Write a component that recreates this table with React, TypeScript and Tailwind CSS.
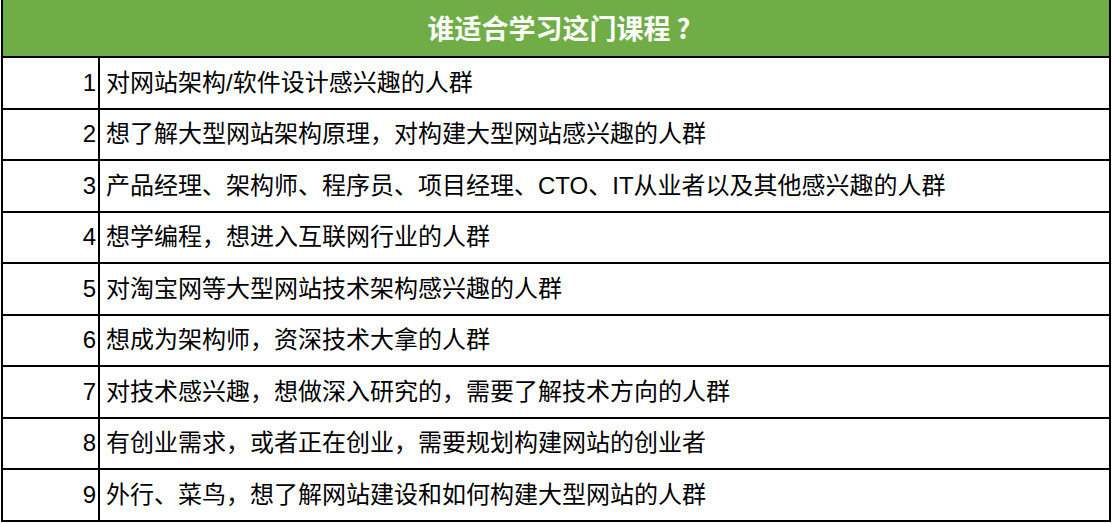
const ROWS = [
  "对网站架构/软件设计感兴趣的人群",
  "想了解大型网站架构原理，对构建大型网站感兴趣的人群",
  "产品经理、架构师、程序员、项目经理、CTO、IT从业者以及其他感兴趣的人群",
  "想学编程，想进入互联网行业的人群",
  "对淘宝网等大型网站技术架构感兴趣的人群",
  "想成为架构师，资深技术大拿的人群",
  "对技术感兴趣，想做深入研究的，需要了解技术方向的人群",
  "有创业需求，或者正在创业，需要规划构建网站的创业者",
  "外行、菜鸟，想了解网站建设和如何构建大型网站的人群",
];

export default function App() {
  return (
    <div className="h-[524px] w-[1112px] overflow-hidden bg-white font-['Liberation_Sans','Noto_Sans_CJK_SC',sans-serif] text-black">
      <div className="ml-[1px] w-[1110px] border-x-2 border-b-2 border-black">
        <div className="flex h-[56px] items-center justify-center bg-[#70ad47] pl-[6px] font-['Noto_Sans_CJK_SC',sans-serif] text-[27px] font-bold text-white">
          谁适合学习这门课程 ?
        </div>
        {ROWS.map((text, i) => (
          <div key={i} className="grid h-[51.5px] grid-cols-[97px_1fr] border-t-2 border-black text-[24px]">
            <div className="flex items-center justify-end border-r-2 border-black pr-[2px]">{i + 1}</div>
            <div className="flex items-center whitespace-nowrap pl-[6px]">{text}</div>
          </div>
        ))}
      </div>
    </div>
  );
}
